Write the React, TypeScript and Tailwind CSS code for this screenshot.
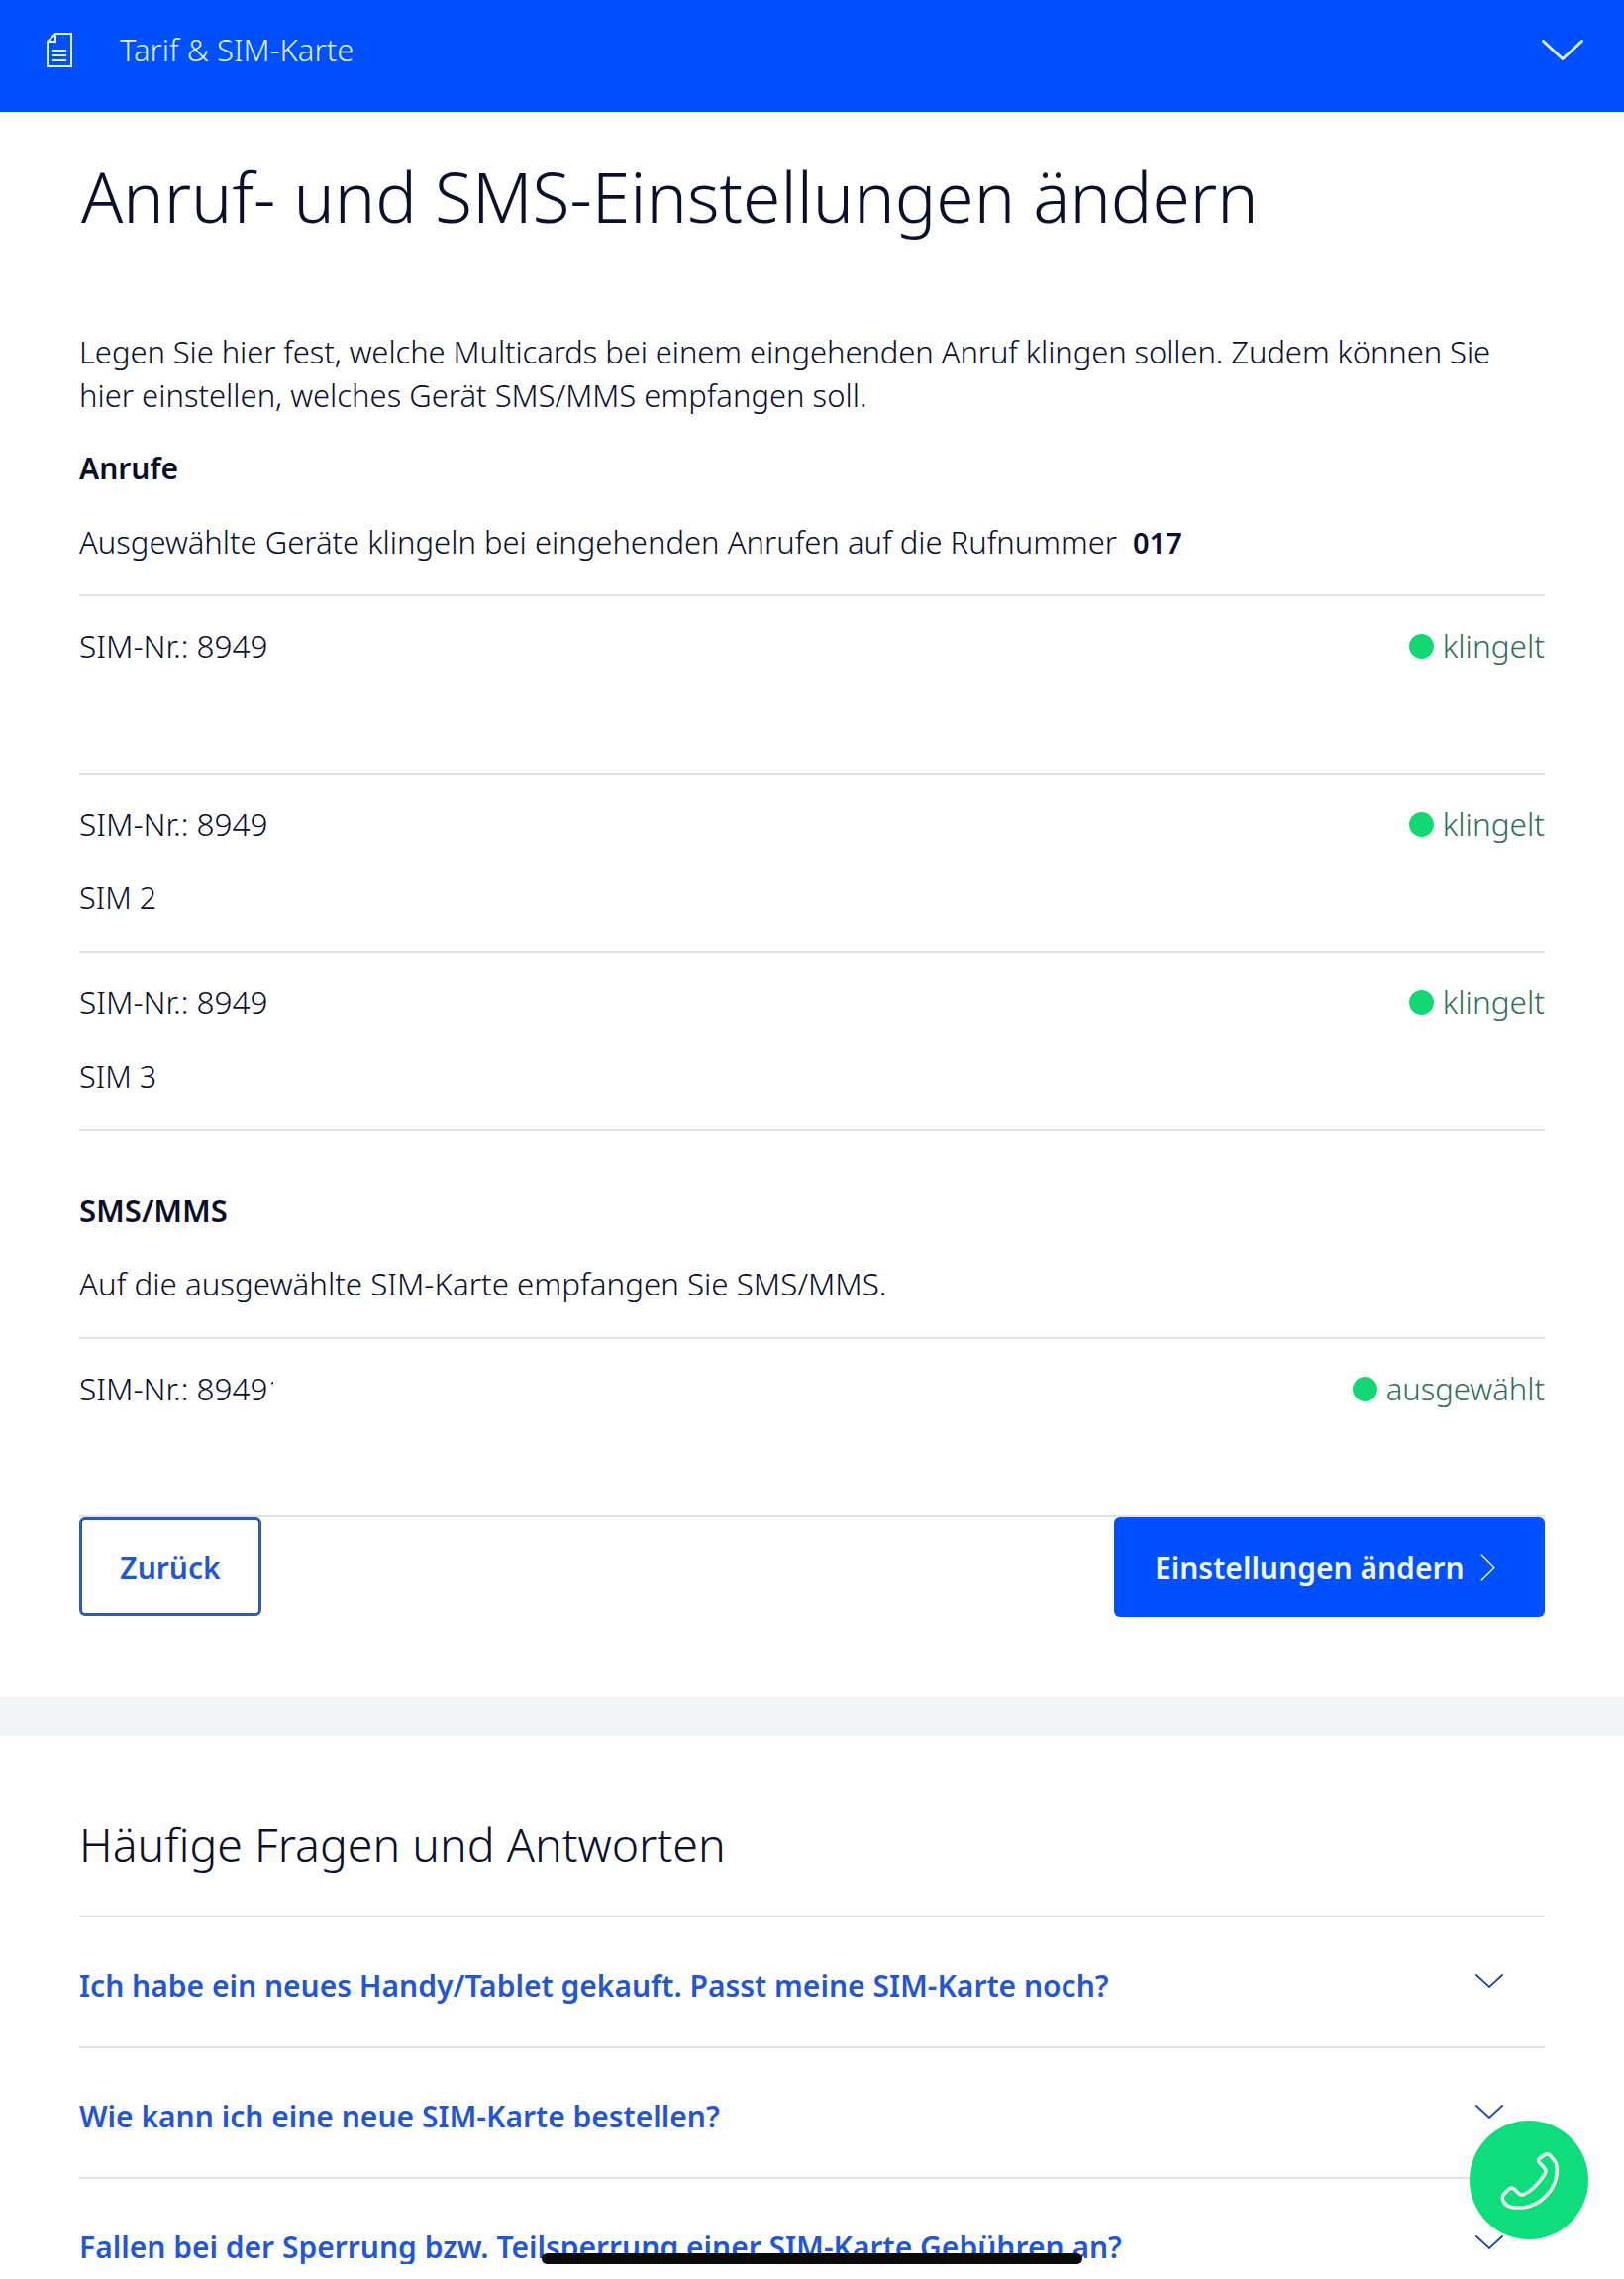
import React from 'react';

const font = { fontFamily: '"Noto Sans", sans-serif' };

const Chevron = ({ className }: { className: string }) => (
    <svg viewBox="0 0 28 14" fill="none" stroke="currentColor" strokeWidth="2" strokeLinecap="round" strokeLinejoin="round" className={className}>
        <path d="M1 1 L14 13 L27 1" />
    </svg>
);

const Status = ({ label }: { label: string }) => (
    <div className="flex items-center gap-[9px] text-[#2f6f5a]">
        <span className="w-[25px] h-[25px] rounded-full bg-[#12d873]" />
        <span className="font-light">{label}</span>
    </div>
);

const simRows = [
    { name: '', status: 'klingelt' },
    { name: 'SIM 2', status: 'klingelt' },
    { name: 'SIM 3', status: 'klingelt' },
];

const faqs = [
    'Ich habe ein neues Handy/Tablet gekauft. Passt meine SIM-Karte noch?',
    'Wie kann ich eine neue SIM-Karte bestellen?',
    'Fallen bei der Sperrung bzw. Teilsperrung einer SIM-Karte Gebühren an?',
];

export default function App() {
    return (
        <div style={font} className="relative w-[1640px] h-[2301px] overflow-hidden bg-white text-[#0b0f2b]">
            <header className="h-[113px] bg-[#0050ff] text-[#dff0ff] flex items-center justify-between pl-[47px] pr-[41px] pb-[12px]">
                <div className="flex items-center gap-[48px]">
                    <svg viewBox="0 0 26 35" fill="none" stroke="currentColor" strokeWidth="2" className="w-[26px] h-[35px]">
                        <path d="M9 1 H25 V34 H1 V9 Z" />
                        <path d="M9 1 V9 H1" />
                        <path d="M6 18 H20 M6 23 H20 M6 28 H20" />
                    </svg>
                    <span className="text-[31px] font-light">Tarif &amp; SIM-Karte</span>
                </div>
                <Chevron className="w-[42px] h-[21px]" />
            </header>

            <main className="px-[80px]">
                <h1 className="text-[69.5px] leading-[100px] font-light pt-[35px] pl-[2px]">Anruf- und SMS-Einstellungen ändern</h1>

                <p className="mt-[85px] text-[31px] leading-[44px] font-light">
                    <span className="tracking-[-0.09px]">Legen Sie hier fest, welche Multicards bei einem eingehenden Anruf klingen sollen. Zudem können Sie</span><br />
                    hier einstellen, welches Gerät SMS/MMS empfangen soll.
                </p>
                <h2 className="mt-[30px] text-[30px] leading-[44px] font-semibold">Anrufe</h2>
                <p className="mt-[30px] text-[31px] leading-[44px] font-light">
                    Ausgewählte Geräte klingeln bei eingehenden Anrufen auf die Rufnummer <span className="text-[29px] font-semibold ml-[8px]">017</span>
                </p>

                <div className="mt-[30px] border-t-2 border-[#e2e2e2]">
                    {simRows.map((row, i) => (
                        <div key={i} className="h-[180px] border-b-2 border-[#e2e2e2] pt-[28px] text-[31.5px] leading-[44px]">
                            <div className="flex justify-between">
                                <span className="font-light">SIM-Nr.: 8949</span>
                                <Status label={row.status} />
                            </div>
                            <div className="mt-[30px] text-[30.5px] font-light">{row.name}</div>
                        </div>
                    ))}
                </div>

                <h2 className="mt-[58px] text-[31px] leading-[44px] font-semibold">SMS/MMS</h2>
                <p className="mt-[30px] text-[31.3px] leading-[44px] font-light">Auf die ausgewählte SIM-Karte empfangen Sie SMS/MMS.</p>

                <div className="mt-[32px] h-[182px] border-t-2 border-b-2 border-[#e2e2e2] pt-[28px] text-[31px] leading-[44px]">
                    <div className="flex justify-between">
                        <span className="w-[196px] overflow-hidden whitespace-nowrap text-[31.5px] font-light">SIM-Nr.: 89491</span>
                        <Status label="ausgewählt" />
                    </div>
                </div>

                <div className="flex justify-between items-start h-[181px]">
                    <button className="w-[184px] h-[100px] border-[3px] border-[#2a5bb5] rounded-[6px] text-[30px] font-semibold text-[#2356d6]">Zurück</button>
                    <button className="w-[435px] h-[101px] bg-[#0050ff] rounded-[6px] text-[30px] font-semibold text-[#eef6ff] flex items-center justify-start pl-[41px] gap-[16px]">
                        Einstellungen ändern
                        <svg viewBox="0 0 16 30" fill="none" stroke="currentColor" strokeWidth="1.5" strokeLinecap="round" className="w-[15px] h-[27px]">
                            <path d="M1 1 L15 15 L1 29" />
                        </svg>
                    </button>
                </div>
            </main>

            <div className="h-[40px] bg-[#f3f4f6]" />

            <section className="px-[80px]">
                <h2 className="pt-[79px] h-[181px] text-[46.5px] leading-[60px] font-light">Häufige Fragen und Antworten</h2>
                {faqs.map((q) => (
                    <div key={q} className="h-[132px] border-t-2 border-[#e2e2e2] flex items-start justify-between pr-[42px] pt-[47px]">
                        <span className="text-[30px] leading-[44px] font-semibold text-[#2356d6] whitespace-nowrap">{q}</span>
                        <Chevron className="w-[28px] h-[14px] mt-[10px] text-[#2f4f9f]" />
                    </div>
                ))}
            </section>

            {/* call button floats over the list */}
            <button className="absolute left-[1484px] top-[2141px] w-[120px] h-[120px] rounded-full bg-[#0fdc7a] flex items-center justify-center">
                <svg viewBox="0 0 60 60" fill="none" stroke="#e8fff3" strokeWidth="3.5" strokeLinejoin="round" className="w-[60px] h-[60px]">
                    <path d="M47 4 Q50 3 53 7 L56 11 Q59 14 58 25 Q56 40 42 51 Q30 59 17 58 Q7 58 4 51 Q2 47 5 44 L10 39 Q12 37 15 39 L20 44 Q23 46 26 44 Q34 40 41 31 Q47 24 47 21 Q47 19 44 16 L41 13 Q38 10 41 8 Z" />
                </svg>
            </button>

            {/* home indicator */}
            <div className="absolute left-[547px] top-[2275px] w-[546px] h-[11px] rounded-full bg-[#0a0a0a]" />
            <div className="absolute left-0 top-[2286px] w-full h-[15px] bg-white" />
        </div>
    );
}
